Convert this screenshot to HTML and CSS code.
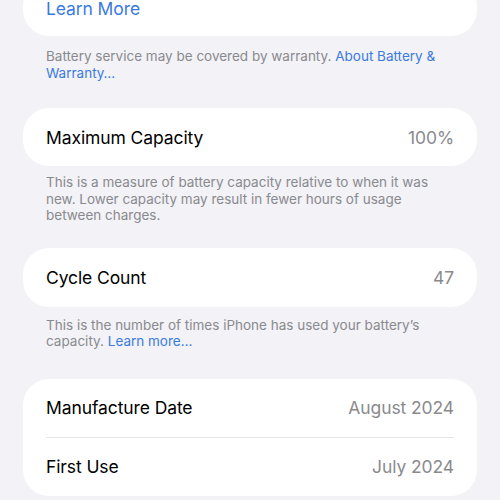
FILE: index.html
```html
<!DOCTYPE html>
<html lang="en">
<head>
<meta charset="utf-8">
<title>Battery Health</title>
<link rel="stylesheet" href="styles.css">
</head>
<body>
<main class="page">
  <section class="group group-first">
    <div class="card">
      <div class="row row-short"><span class="link-label">Learn More</span></div>
    </div>
    <p class="note note-1">Battery service may be covered by warranty. <span class="link">About Battery &amp; Warranty…</span></p>
  </section>

  <section class="group">
    <div class="card">
      <div class="row"><span class="label">Maximum Capacity</span><span class="value">100%</span></div>
    </div>
    <p class="note note-2">This is a measure of battery capacity relative to when it was new. Lower capacity may result in fewer hours of usage between charges.</p>
  </section>

  <section class="group">
    <div class="card">
      <div class="row row-tall"><span class="label">Cycle Count</span><span class="value">47</span></div>
    </div>
    <p class="note note-3">This is the number of times iPhone has used your battery’s capacity. <span class="link">Learn more…</span></p>
  </section>

  <section class="group">
    <div class="card">
      <div class="row"><span class="label">Manufacture Date</span><span class="value">August 2024</span></div>
      <div class="divider"></div>
      <div class="row"><span class="label">First Use</span><span class="value">July 2024</span></div>
    </div>
  </section>
</main>
</body>
</html>
```

FILE: styles.css
```css
* { box-sizing: border-box; }
html, body {
  margin: 0;
  padding: 0;
  background: #f2f2f7;
  overflow: hidden;
}
body {
  font-family: Inter, "Liberation Sans", sans-serif;
  -webkit-font-smoothing: antialiased;
}
.page {
  display: flex;
  flex-direction: column;
  padding: 0 23px;
  width: 500px;
  height: 500px;
  overflow: hidden;
}
.group-first { margin-top: -20px; }
.card {
  background: #ffffff;
  border-radius: 26px;
  padding: 0 23px;
}
.row {
  display: flex;
  align-items: center;
  justify-content: space-between;
  height: 58px;
}
.row-short { height: 56px; }
.row-tall { height: 59px; }
.label, .link-label, .value {
  font-size: 17.5px;
  letter-spacing: -0.1px;
}
.label { color: #000000; }
.link-label { color: #3b7be0; }
.value { color: #8a8a8e; }
.divider {
  height: 1px;
  background: #e3e3e8;
}
.note {
  margin: 0;
  padding: 0 23px;
  font-size: 13.5px;
  line-height: 16.5px;
  color: #8a8a8e;
}
.note-1 { margin: 12px 0 27px; }
.note-2 { margin: 8px 0 24px; }
.note-3 { margin: 10px 0 29px; }
.link { color: #3b7be0; }
```
